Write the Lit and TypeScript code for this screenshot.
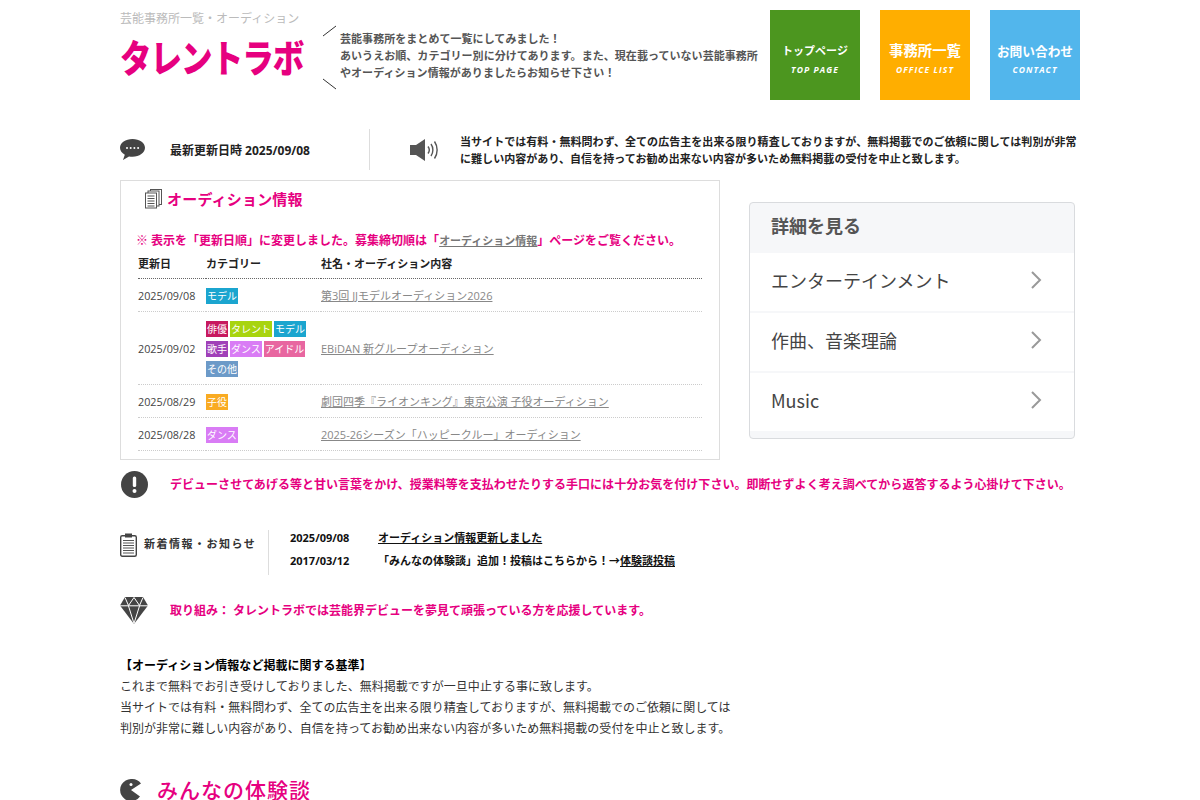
import { LitElement, html, css } from "lit";
import { customElement } from "lit/decorators.js";

const TAGS: Record<string, string> = {
  モデル: "#1ba5cf",
  俳優: "#c7195f",
  タレント: "#a8d40f",
  歌手: "#a040b8",
  ダンス: "#d97cf5",
  アイドル: "#e866a0",
  その他: "#6c9ac8",
  子役: "#f9ab22",
};

const ROWS = [
  { date: "2025/09/08", tags: ["モデル"], title: "第3回 JJモデルオーディション2026" },
  {
    date: "2025/09/02",
    tags: ["俳優", "タレント", "モデル", "歌手", "ダンス", "アイドル", "その他"],
    title: "EBiDAN 新グループオーディション",
  },
  { date: "2025/08/29", tags: ["子役"], title: "劇団四季『ライオンキング』東京公演 子役オーディション" },
  { date: "2025/08/28", tags: ["ダンス"], title: "2025-26シーズン「ハッピークルー」オーディション" },
];

const NAV = [
  { ja: "トップページ", en: "TOP PAGE", color: "#4c961f", size: 11 },
  { ja: "事務所一覧", en: "OFFICE LIST", color: "#ffae00", size: 14.4 },
  { ja: "お問い合わせ", en: "CONTACT", color: "#52b6ec", size: 12.7 },
];

@customElement("app-root")
export class AppRoot extends LitElement {
  static styles = css`
    :host {
      display: block;
      height: 800px;
      overflow: hidden;
      background: #fff;
      color: #333;
      font-family: "Open Sans", "Noto Sans CJK JP", sans-serif;
      font-size: 12px;
    }
    a {
      color: inherit;
    }
    .wrap {
      width: 960px;
      margin: 0 auto;
    }
    .header {
      display: flex;
      height: 100px;
      padding-top: 10px;
      box-sizing: border-box;
    }
    .brand {
      width: 203px;
      flex: none;
    }
    .sub {
      color: #bbb;
      font-size: 12px;
      line-height: 18px;
    }
    .logo {
      margin-top: 7px;
      color: #e6007f;
      font-family: "Noto Sans CJK JP", sans-serif;
      font-size: 38px;
      font-weight: 900;
      line-height: 42px;
      letter-spacing: -1.2px;
      white-space: nowrap;
      transform: scaleX(0.83);
      transform-origin: left center;
    }
    .slashes {
      width: 17px;
      height: 90px;
      flex: none;
    }
    .lead {
      width: 430px;
      flex: none;
      padding-top: 20px;
      color: #555;
      font-size: 11px;
      font-weight: 700;
      line-height: 17px;
      letter-spacing: 0.05px;
      white-space: nowrap;
    }
    .nav {
      display: flex;
      gap: 20px;
    }
    .btn {
      width: 90px;
      height: 90px;
      display: flex;
      flex-direction: column;
      align-items: center;
      justify-content: center;
      padding-top: 8px;
      box-sizing: border-box;
      color: #fff;
    }
    .btn b {
      line-height: 18px;
      white-space: nowrap;
    }
    .btn i {
      margin-top: 4px;
      font-size: 8.5px;
      font-weight: 700;
      line-height: 12px;
      letter-spacing: 1.1px;
    }
    .info {
      display: flex;
      align-items: center;
      height: 41px;
      margin-top: 29px;
      color: #222;
      font-weight: 700;
    }
    .updated {
      display: flex;
      align-items: center;
      gap: 25px;
      width: 249px;
      height: 41px;
      flex: none;
      border-right: 1px solid #ddd;
      font-size: 12px;
    }
    .notice {
      display: flex;
      align-items: center;
      gap: 20px;
      margin-left: 40px;
      font-size: 11px;
      line-height: 17px;
      letter-spacing: 0.05px;
      white-space: nowrap;
    }
    .content {
      display: flex;
      align-items: flex-start;
      margin-top: 10px;
    }
    .box {
      width: 600px;
      height: 280px;
      box-sizing: border-box;
      border: 1px solid #ddd;
      padding: 0 16px 0 15px;
      flex: none;
    }
    .box-title {
      display: flex;
      align-items: center;
      gap: 4px;
      height: 35px;
      margin: 0;
      padding-left: 9px;
      color: #e6007f;
      font-size: 15px;
      font-weight: 700;
      letter-spacing: 0.2px;
    }
    .alert {
      margin-top: 16px;
      color: #e6007f;
      font-weight: 700;
      line-height: 18px;
      white-space: nowrap;
    }
    .alert a {
      color: #777;
      font-size: 11px;
    }
    table {
      width: 564px;
      margin: 1px 0 0 2px;
      border-collapse: collapse;
      table-layout: fixed;
    }
    th {
      height: 27px;
      padding: 0 0 2px;
      box-sizing: border-box;
      text-align: left;
      color: #222;
      font-size: 11px;
      font-weight: 700;
      border-bottom: 1px dotted #666;
    }
    td {
      padding: 9px 0 7px;
      color: #444;
      font-size: 10.8px;
      border-bottom: 1px dotted #ccc;
    }
    td:last-child {
      padding: 8px 0;
    }
    td a {
      color: #888;
      font-size: 11px;
      white-space: nowrap;
    }
    .tags {
      display: flex;
      flex-wrap: wrap;
      gap: 4px 2px;
      width: 105px;
    }
    .tag {
      padding: 0 1px;
      height: 16px;
      color: #fff;
      font-size: 10px;
      line-height: 16px;
    }
    .widget {
      width: 324px;
      height: 235px;
      margin: 22px 0 0 29px;
      border: 1px solid #d9dbde;
      border-radius: 4px;
      overflow: hidden;
      background: #f6f7f9;
      color: #444;
      font-family: "Noto Sans CJK JP", sans-serif;
      flex: none;
    }
    .widget-head {
      height: 50px;
      padding-left: 21px;
      font-size: 18px;
      font-weight: 700;
      line-height: 45px;
      color: #555;
    }
    .widget-row {
      display: flex;
      align-items: center;
      justify-content: space-between;
      height: 58px;
      margin-bottom: 2px;
      padding: 0 32px 4px 21px;
      box-sizing: border-box;
      background: #fff;
      font-size: 18px;
    }
    .warn,
    .pledge {
      display: flex;
      align-items: center;
      color: #e6007f;
      font-weight: 700;
      white-space: nowrap;
    }
    .warn {
      gap: 23px;
      height: 28px;
      margin-top: 10px;
      letter-spacing: 0.03px;
    }
    .warn svg {
      margin-left: 1px;
      margin-right: -1px;
    }
    .news {
      display: flex;
      align-items: flex-start;
      height: 45px;
      margin-top: 32px;
    }
    .news-label {
      display: flex;
      align-items: flex-start;
      gap: 7px;
      width: 149px;
      height: 45px;
      padding-top: 3px;
      box-sizing: border-box;
      border-right: 1px solid #ddd;
      font-size: 11px;
      font-weight: 700;
      line-height: 21px;
      letter-spacing: 1.5px;
      color: #333;
    }
    .news-list {
      display: grid;
      grid-template-columns: 88px auto;
      row-gap: 7px;
      margin-left: 21px;
      color: #111;
      font-size: 11px;
      font-weight: 700;
      line-height: 16px;
    }
    .pledge {
      gap: 22px;
      height: 28px;
      margin-top: 21px;
    }
    .policy {
      margin-top: 31px;
      line-height: 21px;
      letter-spacing: 0.02px;
      color: #333;
      white-space: nowrap;
    }
    .policy b {
      color: #000;
    }
    .voices {
      display: flex;
      align-items: center;
      gap: 15px;
      margin-top: 36px;
      color: #e6007f;
      font-size: 21px;
      font-weight: 500;
      letter-spacing: 1px;
      line-height: 30px;
    }
  `;

  render() {
    return html`
      <div class="wrap">
        <header class="header">
          <div class="brand">
            <div class="sub">芸能事務所一覧・オーディション</div>
            <div class="logo">タレントラボ</div>
          </div>
          <svg class="slashes" viewBox="0 0 17 90">
            <path d="M0 26 L13 16 M0 69 L13 79" stroke="#333" stroke-width="1" fill="none" />
          </svg>
          <div class="lead">
            芸能事務所をまとめて一覧にしてみました！<br />
            あいうえお順、カテゴリー別に分けてあります。また、現在載っていない芸能事務所<br />
            やオーディション情報がありましたらお知らせ下さい！
          </div>
          <nav class="nav">
            ${NAV.map(
              (n) => html`
                <div class="btn" style="background:${n.color}">
                  <b style="font-size:${n.size}px">${n.ja}</b><i>${n.en}</i>
                </div>
              `
            )}
          </nav>
        </header>

        <section class="info">
          <div class="updated">
            <svg width="25" height="22" viewBox="0 0 25 22">
              <path
                d="M12.5 0C5.6 0 0 3.8 0 8.8c0 2.9 1.9 5.3 4.8 6.9L3 21l6-3.6c1.1.2 2.3.3 3.5.3 6.9 0 12.5-3.9 12.5-8.9S19.4 0 12.5 0z"
                fill="#444"
              />
              <g fill="#fff">
                <circle cx="7" cy="9" r="1" /><circle cx="10.7" cy="9" r="1" />
                <circle cx="14.4" cy="9" r="1" /><circle cx="18.1" cy="9" r="1" />
              </g>
            </svg>
            <span>最新更新日時 2025/09/08</span>
          </div>
          <div class="notice">
            <svg width="30" height="22" viewBox="0 0 30 22">
              <path d="M0 6h6l9-6v22l-9-6H0z" fill="#555" />
              <path
                d="M18 7.5c1.5 2 1.5 5 0 7M21 5c2.5 3.500 2.500 8.500 0 12M24.500 2.500c3.500 5 3.500 12 0 17"
                stroke="#555"
                stroke-width="1.400"
                fill="none"
              />
            </svg>
            <span>
              当サイトでは有料・無料問わず、全ての広告主を出来る限り精査しておりますが、無料掲載でのご依頼に関しては判別が非常<br />
              に難しい内容があり、自信を持ってお勧め出来ない内容が多いため無料掲載の受付を中止と致します。
            </span>
          </div>
        </section>

        <section class="content">
          <div class="box">
            <h2 class="box-title">
              <svg width="18" height="20" viewBox="0 0 18 20">
                <g fill="#fff" stroke="#555" stroke-width="1">
                  <rect x="5.500" y="0.500" width="11" height="15" />
                  <rect x="3" y="2" width="11" height="15" />
                  <rect x="0.500" y="4" width="11" height="15" />
                </g>
                <path d="M2.500 7h7M2.500 9.500h7M2.500 12h7M2.500 14.500h7M2.500 17h7" stroke="#555" />
              </svg>
              オーディション情報
            </h2>
            <div class="alert">
              ※ 表示を「更新日順」に変更しました。募集締切順は「<a href="#">オーディション情報</a>」ページをご覧ください。
            </div>
            <table>
              <colgroup>
                <col style="width:68px" />
                <col style="width:115px" />
                <col />
              </colgroup>
              <thead>
                <tr><th>更新日</th><th>カテゴリー</th><th>社名・オーディション内容</th></tr>
              </thead>
              <tbody>
                ${ROWS.map(
                  (r) => html`
                    <tr>
                      <td>${r.date}</td>
                      <td>
                        <div class="tags">
                          ${r.tags.map(
                            (t) => html`<span class="tag" style="background:${TAGS[t]}">${t}</span>`
                          )}
                        </div>
                      </td>
                      <td><a href="#">${r.title}</a></td>
                    </tr>
                  `
                )}
              </tbody>
            </table>
          </div>
          <aside class="widget">
            <div class="widget-head">詳細を見る</div>
            ${["エンターテインメント", "作曲、音楽理論", "Music"].map(
              (t) => html`
                <div class="widget-row">
                  <span>${t}</span>
                  <svg width="11" height="18" viewBox="0 0 11 18">
                    <path d="M1 1l8 8-8 8" stroke="#999" stroke-width="2" fill="none" />
                  </svg>
                </div>
              `
            )}
          </aside>
        </section>

        <section class="warn">
          <svg width="27" height="27" viewBox="0 0 27 27">
            <circle cx="13.500" cy="13.500" r="13.500" fill="#444" />
            <rect x="11.800" y="5.500" width="3.400" height="10.500" rx="1.500" fill="#fff" />
            <circle cx="13.500" cy="20" r="2" fill="#fff" />
          </svg>
          デビューさせてあげる等と甘い言葉をかけ、授業料等を支払わせたりする手口には十分お気を付け下さい。即断せずよく考え調べてから返答するよう心掛けて下さい。
        </section>

        <section class="news">
          <div class="news-label">
            <svg width="17" height="24" viewBox="0 0 17 24">
              <rect x="0.700" y="2.700" width="15.600" height="20.600" rx="1.500" fill="#fff" stroke="#444" stroke-width="1.400" />
              <rect x="5" y="0.500" width="7" height="4" fill="#444" />
              <path d="M3 7.500h11M3 10h11M3 12.500h11M3 15h11M3 17.500h11M3 20h11" stroke="#555" />
            </svg>
            新着情報・お知らせ
          </div>
          <div class="news-list">
            <span>2025/09/08</span><span><a href="#">オーディション情報更新しました</a></span>
            <span>2017/03/12</span><span>「みんなの体験談」追加！投稿はこちらから！→<a href="#">体験談投稿</a></span>
          </div>
        </section>

        <section class="pledge">
          <svg width="28" height="27" viewBox="0 0 28 27">
            <path d="M5 0h18l5 8.500L14 27 0 8.500z" fill="#444" />
            <path
              d="M0 8.800h28M5 0.500l3.500 8 5.500-8 5.500 8 3.500-8M8.500 9l5.500 17.500L19.500 9"
              stroke="#fff"
              stroke-width="1"
              fill="none"
            />
          </svg>
          取り組み： タレントラボでは芸能界デビューを夢見て頑張っている方を応援しています。
        </section>

        <section class="policy">
          <b>【オーディション情報など掲載に関する基準】</b><br />
          これまで無料でお引き受けしておりました、無料掲載ですが一旦中止する事に致します。<br />
          当サイトでは有料・無料問わず、全ての広告主を出来る限り精査しておりますが、無料掲載でのご依頼に関しては<br />
          判別が非常に難しい内容があり、自信を持ってお勧め出来ない内容が多いため無料掲載の受付を中止と致します。
        </section>

        <section class="voices">
          <svg width="22" height="24" viewBox="0 0 22 24">
            <path d="M11 1a11 11 0 1 0 9 17.500L11 12l10-6.500A11 11 0 0 0 11 1z" fill="#444" />
            <circle cx="11" cy="6.500" r="1.500" fill="#fff" />
          </svg>
          みんなの体験談
        </section>
      </div>
    `;
  }
}
